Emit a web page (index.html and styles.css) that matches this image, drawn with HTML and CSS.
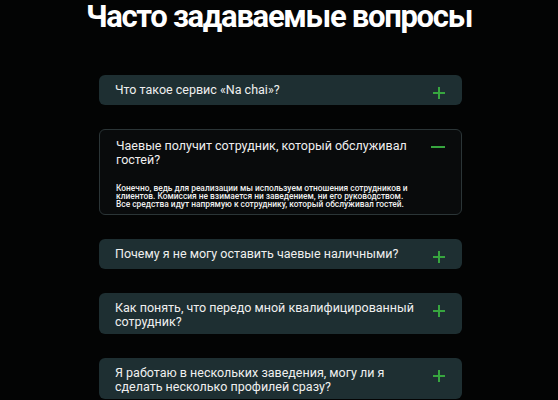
FILE: index.html
```html
<!DOCTYPE html>
<html lang="ru">
<head>
    <meta charset="UTF-8">
    <meta name="viewport" content="width=device-width, initial-scale=1.0">
    <title>Часто задаваемые вопросы</title>
    <link rel="stylesheet" href="styles.css">
</head>
<body>
    <section class="faq">
        <h2 class="faq-title">Часто задаваемые вопросы</h2>

        <div class="faq-list">
            <div class="faq-item">
                <div class="faq-head">
                    <p class="faq-question">Что такое сервис «Na chai»?</p>
                    <span class="faq-icon plus"></span>
                </div>
            </div>

            <div class="faq-item open">
                <div class="faq-head">
                    <p class="faq-question">Чаевые получит сотрудник, который обслуживал гостей?</p>
                    <span class="faq-icon minus"></span>
                </div>
                <p class="faq-answer">Конечно, ведь для реализации мы используем отношения сотрудников и клиентов. Комиссия не взимается ни заведением, ни его руководством. Все средства идут напрямую к сотруднику, который обслуживал гостей.</p>
            </div>

            <div class="faq-item">
                <div class="faq-head">
                    <p class="faq-question">Почему я не могу оставить чаевые наличными?</p>
                    <span class="faq-icon plus"></span>
                </div>
            </div>

            <div class="faq-item">
                <div class="faq-head">
                    <p class="faq-question">Как понять, что передо мной квалифицированный сотрудник?</p>
                    <span class="faq-icon plus"></span>
                </div>
            </div>

            <div class="faq-item">
                <div class="faq-head">
                    <p class="faq-question">Я работаю в нескольких заведения, могу ли я сделать несколько профилей сразу?</p>
                    <span class="faq-icon plus"></span>
                </div>
            </div>
        </div>
    </section>
</body>
</html>
```

FILE: styles.css
```css
:root {
    --page-bg: #030404;
    --card-bg: #1e2f32;
    --card-border: #2b3537;
    --text-color: #efefef;
    --accent: #37a63f;
}

body {
    font-family: Roboto, "Noto Sans", Arial, sans-serif;
    margin: 0;
    background-color: var(--page-bg);
    color: var(--text-color);
    overflow: hidden;
}

.faq {
    padding-top: 1px;
}

.faq-title {
    margin: 0;
    text-align: center;
    font-size: 31px;
    line-height: 31px;
    font-weight: 700;
    letter-spacing: -1.3px;
    color: #fff;
}

.faq-list {
    width: 363px;
    margin: 43px 0 0 99px;
    display: flex;
    flex-direction: column;
    gap: 24px;
}

.faq-item {
    background: var(--card-bg);
    border-radius: 6px;
    padding: 8px 17px 6px 16px;
}

.faq-item.open {
    background: #090b0c;
    border: 1px solid var(--card-border);
    padding: 9px 16px 6px 16px;
}

.faq-head {
    display: flex;
    align-items: flex-start;
    justify-content: space-between;
    gap: 12px;
}

.faq-question {
    margin: 0;
    font-size: 12.5px;
    line-height: 13.5px;
    max-width: 308px;
}

.faq-icon {
    position: relative;
    flex: 0 0 auto;
    width: 12px;
    height: 12px;
    margin-top: 4px;
}

.faq-icon::before,
.faq-icon::after {
    content: "";
    position: absolute;
    background: var(--accent);
}

.plus::before {
    left: 0;
    top: 5.25px;
    width: 12px;
    height: 1.5px;
}

.plus::after {
    left: 5.25px;
    top: 0;
    width: 1.5px;
    height: 12px;
}

.minus {
    width: 14px;
    margin-top: 2px;
}

.minus::before {
    left: 0;
    top: 5px;
    width: 14px;
    height: 2px;
}

.minus::after {
    display: none;
}

.faq-answer {
    margin: 18px 0 0;
    font-size: 8.4px;
    line-height: 8px;
    font-weight: 500;
    max-width: 300px;
}
```
